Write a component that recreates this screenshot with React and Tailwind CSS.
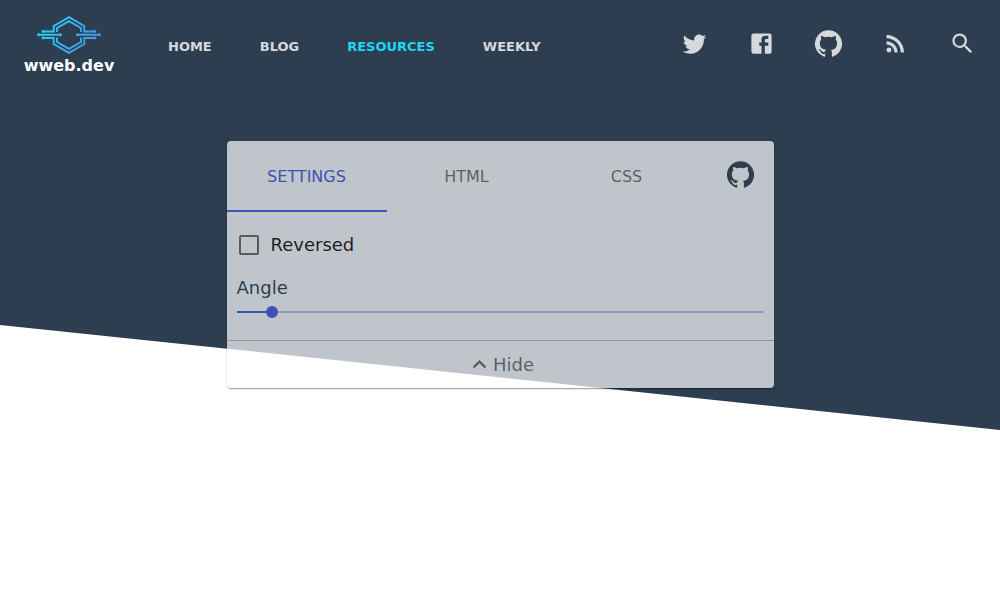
import { useState } from "react";
import { MdExpandLess, MdExpandMore, MdRssFeed, MdSearch } from "react-icons/md";

const TWITTER =
  "M22.46,6C21.69,6.35 20.86,6.58 20,6.69C20.88,6.16 21.56,5.32 21.88,4.31C21.05,4.81 20.13,5.16 19.16,5.36C18.37,4.5 17.26,4 16,4C13.65,4 11.73,5.92 11.73,8.29C11.73,8.63 11.77,8.96 11.84,9.27C8.28,9.09 5.11,7.38 3,4.79C2.63,5.42 2.42,6.16 2.42,6.94C2.42,8.43 3.17,9.75 4.33,10.5C3.62,10.5 2.96,10.3 2.38,10C2.38,10 2.38,10 2.38,10.03C2.38,12.11 3.86,13.85 5.82,14.24C5.46,14.34 5.08,14.39 4.69,14.39C4.42,14.39 4.15,14.36 3.89,14.31C4.43,16 6,17.26 7.89,17.29C6.43,18.45 4.58,19.13 2.56,19.13C2.22,19.13 1.88,19.11 1.54,19.07C3.44,20.29 5.7,21 8.12,21C16,21 20.33,14.46 20.33,8.79C20.33,8.6 20.33,8.42 20.32,8.23C21.16,7.63 21.88,6.87 22.46,6Z";
const FACEBOOK =
  "M5,3H19A2,2 0 0,1 21,5V19A2,2 0 0,1 19,21H5A2,2 0 0,1 3,19V5A2,2 0 0,1 5,3M18,5H15.5A3.5,3.5 0 0,0 12,8.5V11H10V14H12V21H15V14H18V11H15V9A1,1 0 0,1 16,8H18V5Z";
const GITHUB =
  "M12 .3a12 12 0 0 0-3.8 23.4c.6.1.8-.3.8-.6v-2c-3.3.7-4-1.6-4-1.6-.6-1.4-1.4-1.8-1.4-1.8-1-.7.1-.7.1-.7 1.2 0 1.9 1.2 1.9 1.2 1 1.8 2.8 1.3 3.5 1 0-.8.4-1.3.7-1.6-2.7-.3-5.5-1.3-5.5-6 0-1.2.5-2.3 1.3-3.1-.2-.4-.6-1.6 0-3.2 0 0 1-.3 3.4 1.2a11.5 11.5 0 0 1 6 0c2.3-1.5 3.3-1.2 3.3-1.2.6 1.6.2 2.8 0 3.2.9.8 1.3 1.9 1.3 3.2 0 4.6-2.8 5.6-5.5 5.9.5.4.9 1 .9 2.2v3.3c0 .3.1.7.8.6A12 12 0 0 0 12 .3";

function PathIcon({ d }) {
  return (
    <svg viewBox="0 0 24 24" className="size-[27px]" fill="currentColor" fillRule="evenodd" aria-hidden="true">
      <path d={d} />
    </svg>
  );
}

function Logo() {
  return (
    <a href="#home" className="flex w-[90px] flex-col items-center text-white">
      <svg viewBox="0 0 64 38" className="h-[38px] w-16" aria-hidden="true">
        <defs>
          <linearGradient id="logo" gradientUnits="userSpaceOnUse" x1="8" y1="4" x2="56" y2="34">
            <stop offset="0" stopColor="#1fd6f5" />
            <stop offset="1" stopColor="#4a90e2" />
          </linearGradient>
        </defs>
        <g fill="none" stroke="url(#logo)" strokeWidth="1.9">
          <path d="M6 15.500H16.700V10L32 1.200L47.300 10V15.500H58" />
          <path d="M6 22H16.700V28L32 36.800L47.300 28V22H58" />
          <path d="M20 16V12L32 5.200L44 12V16" />
          <path d="M20 21.500V26L32 32.800L44 26V21.500" />
          <path d="M1 18.750H24M40 18.750H63" />
        </g>
        <g fill="url(#logo)">
          <circle cx="1.500" cy="18.700" r="1.500" />
          <circle cx="23.500" cy="18.700" r="1.500" />
          <circle cx="40.500" cy="18.700" r="1.500" />
          <circle cx="62.500" cy="18.700" r="1.500" />
          <circle cx="6" cy="15.500" r="1.400" />
          <circle cx="6" cy="22" r="1.400" />
          <circle cx="58" cy="15.500" r="1.400" />
          <circle cx="58" cy="22" r="1.400" />
        </g>
      </svg>
      <span className="text-base leading-6 font-bold">wweb.dev</span>
    </a>
  );
}

const links = ["Home", "Blog", "Resources", "Weekly"];
const tabs = ["Settings", "HTML", "CSS"];
const socials = [
  { label: "Twitter", icon: <PathIcon d={TWITTER} /> },
  { label: "Facebook", icon: <PathIcon d={FACEBOOK} /> },
  { label: "GitHub", icon: <PathIcon d={GITHUB} /> },
  { label: "RSS feed", icon: <MdRssFeed className="size-[27px]" /> },
];

function Header() {
  return (
    <header className="flex items-center pt-4 pr-3 pl-6">
      <Logo />
      <nav className="flex gap-12 pl-[54px] text-[13px] leading-5 font-bold uppercase">
        {links.map((name) => (
          <a
            key={name}
            href={`#${name.toLowerCase()}`}
            className={name === "Resources" ? "text-[#1fd6f5]" : "text-[#d5d8dc]"}
          >
            {name}
          </a>
        ))}
      </nav>
      <div className="mb-2 ml-auto flex gap-4 text-[#d5d8dc]">
        {socials.map(({ label, icon }) => (
          <a key={label} href={`#${label}`} aria-label={label} className="p-3">
            {icon}
          </a>
        ))}
        <button type="button" aria-label="Search" className="p-3">
          <MdSearch className="size-[27px]" />
        </button>
      </div>
    </header>
  );
}

function SettingsCard() {
  const [tab, setTab] = useState("Settings");
  const [reversed, setReversed] = useState(false);
  const [angle, setAngle] = useState(6);
  const [open, setOpen] = useState(true);

  return (
    <section className="mx-auto w-full max-w-[547px] overflow-hidden rounded bg-white/70 text-lg leading-6 shadow-[0_2px_1px_-1px_rgba(0,0,0,0.2),0_1px_1px_0_rgba(0,0,0,0.14),0_1px_3px_0_rgba(0,0,0,0.12)]">
      {open && (
        <>
          <div className="flex h-[71px] items-start">
            <div role="tablist" className="flex h-full flex-1">
              {tabs.map((name) => (
                <button
                  key={name}
                  type="button"
                  role="tab"
                  aria-selected={tab === name}
                  onClick={() => setTab(name)}
                  className={
                    tab === name
                      ? "flex-1 basis-0 border-b-2 border-[#3f51b5] pt-0.5 text-base uppercase text-[#3f51b5]"
                      : "flex-1 basis-0 border-b-2 border-transparent pt-0.5 text-base uppercase text-black/54"
                  }
                >
                  {name}
                </button>
              ))}
            </div>
            <a href="#source" aria-label="View source on GitHub" className="m-2 p-3 text-[#2c3e50]">
              <PathIcon d={GITHUB} />
            </a>
          </div>
          <div className="px-2.5 pt-[21px] pb-[18px]">
            <label className="flex items-center gap-3 pl-0.5 text-black/87">
              <input
                type="checkbox"
                checked={reversed}
                onChange={(e) => setReversed(e.target.checked)}
                className="size-5 appearance-none rounded-xs border-2 border-black/54 checked:border-[#3f51b5] checked:bg-[#3f51b5]"
              />
              Reversed
            </label>
            <label htmlFor="angle" className="mt-[19px] block text-[#2c3e50]">
              Angle
            </label>
            <div className="mt-0.5 grid h-5 items-center">
              <div className="col-start-1 row-start-1 h-0.5 bg-[#3f51b5]/38">
                <div className="h-full bg-[#3f51b5]" style={{ width: `${(angle / 90) * 100}%` }} />
              </div>
              <input
                id="angle"
                type="range"
                min="0"
                max="90"
                value={angle}
                onChange={(e) => setAngle(Number(e.target.value))}
                className="col-start-1 row-start-1 -mx-1.5 h-5 appearance-none bg-transparent [&::-webkit-slider-thumb]:size-3 [&::-webkit-slider-thumb]:appearance-none [&::-webkit-slider-thumb]:rounded-full [&::-webkit-slider-thumb]:bg-[#3f51b5]"
              />
            </div>
          </div>
        </>
      )}
      <button
        type="button"
        onClick={() => setOpen(!open)}
        className="flex h-12 w-full items-center justify-center border-t border-[#2c3e50]/35 text-black/54"
      >
        {open ? <MdExpandLess className="size-[27px]" /> : <MdExpandMore className="size-[27px]" />}
        {open ? "Hide" : "Show"}
      </button>
    </section>
  );
}

export default function App() {
  return (
    <div className="min-h-screen bg-white font-['DejaVu_Sans',sans-serif]">
      <div className="relative isolate pb-[42px]">
        <div className="absolute inset-0 -z-10 bg-[#2c3e50] [clip-path:polygon(0_0,100%_0,100%_100%,0_calc(100%-10.51vw))]" />
        <Header />
        <main className="px-4 pt-[63px]">
          <SettingsCard />
        </main>
      </div>
    </div>
  );
}
